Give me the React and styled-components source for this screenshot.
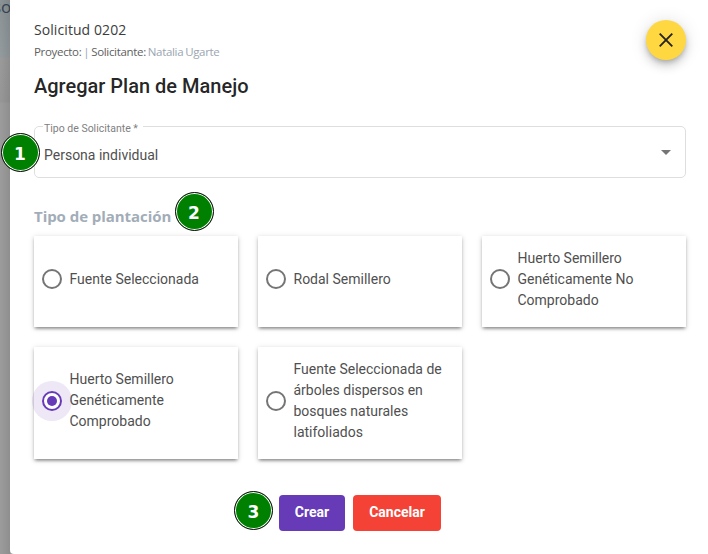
import { useState } from "react";
import styled, { createGlobalStyle, css } from "styled-components";

const GlobalStyle = createGlobalStyle`
  * {
    box-sizing: border-box;
  }

  body {
    margin: 0;
    overflow: hidden;
    font-family: Roboto, "Liberation Sans", sans-serif;
    color: rgba(0, 0, 0, 0.87);
  }
`;

const Screen = styled.div`
  position: relative;
  display: flex;
  width: 708px;
  height: 554px;
  overflow: hidden;
  background: #999;
`;

const Backdrop = styled.div`
  flex: 0 0 10px;
  overflow: hidden;
  background:
    linear-gradient(to right, transparent, rgba(0, 0, 0, 0.09)),
    linear-gradient(#8b9397 0, #949b9e 57px, #9b9b9b 58px, #979797 102px, #9c9c9c 103px);
`;

const BackdropText = styled.div`
  width: 24px;
  margin-left: -7px;
  font-family: "Open Sans", sans-serif;
  font-size: 17px;
  line-height: 13px;
  color: #35424f;
`;

const Dialog = styled.div`
  flex: 1;
  min-width: 0;
  padding: 20px 22px 0 24px;
  border-bottom-left-radius: 4px;
  background: #fff;
`;

const Header = styled.header`
  display: flex;
  justify-content: space-between;
  height: 54px;
`;

const Request = styled.div`
  font-family: "Open Sans", sans-serif;
  font-size: 14px;
  line-height: 20px;
  letter-spacing: 0.08px;
  color: #3c3c3c;
`;

const Project = styled.div`
  font-family: "Open Sans", sans-serif;
  font-size: 11.5px;
  line-height: 23px;
  letter-spacing: -0.32px;
  word-spacing: -0.8px;
  color: #606060;

  span {
    color: #9aa6b2;
  }
`;

const CloseButton = styled.button`
  display: grid;
  place-items: center;
  width: 40px;
  height: 40px;
  padding: 0;
  border: none;
  border-radius: 50%;
  background: #ffd740;
  box-shadow:
    0 3px 5px -1px rgba(0, 0, 0, 0.2),
    0 6px 10px 0 rgba(0, 0, 0, 0.14),
    0 1px 18px 0 rgba(0, 0, 0, 0.12);
`;

const Title = styled.h2`
  margin: 0;
  font-size: 20px;
  font-weight: 500;
  line-height: 25px;
`;

const Select = styled.fieldset`
  display: flex;
  align-items: center;
  justify-content: space-between;
  height: 58px;
  margin: 21px 0 0;
  padding: 0 14px 0 9px;
  border: 1px solid #dedede;
  border-radius: 5px;
  font-size: 14px;
  letter-spacing: 0;
  color: #505050;

  legend {
    height: 12px;
    margin-left: -1px;
    padding: 0 5px 0 1px;
    font-size: 10.5px;
    line-height: 17px;
    letter-spacing: 0;
    color: #808080;
  }

  svg {
    margin-top: -4px;
  }
`;

const SectionTitle = styled.h3`
  margin: 26px 0 7px;
  font-family: "Open Sans", sans-serif;
  font-size: 15px;
  font-weight: 700;
  line-height: 25px;
  letter-spacing: -0.05px;
  color: #a2adb8;
`;

const Options = styled.div`
  display: grid;
  grid-template-columns: repeat(3, 1fr);
  grid-template-rows: 91px 112px;
  gap: 20px;
`;

const Option = styled.label`
  display: flex;
  align-items: center;
  gap: 7.5px;
  padding: 0 14px 5px 8px;
  background: #fff;
  box-shadow:
    0 3px 3px -2px rgba(0, 0, 0, 0.3),
    0 2px 3px 0 rgba(0, 0, 0, 0.18),
    0 1px 6px 0 rgba(0, 0, 0, 0.14);
  font-size: 14px;
  line-height: 21px;
  color: #505050;

  input {
    position: absolute;
    opacity: 0;
  }
`;

const Radio = styled.span`
  display: grid;
  place-items: center;
  flex: 0 0 20px;
  height: 20px;
  border: 2px solid #757575;
  border-radius: 50%;

  ${({ $checked }) =>
    $checked &&
    css`
      border-color: #673ab7;
      box-shadow: 0 0 0 10px rgba(103, 58, 183, 0.12);

      &::after {
        content: "";
        width: 10px;
        height: 10px;
        border-radius: 50%;
        background: #673ab7;
      }
    `}
`;

const Actions = styled.footer`
  display: flex;
  gap: 8px;
  margin: 36px 0 0 245px;
`;

const Button = styled.button`
  width: ${({ $width }) => $width}px;
  height: 36px;
  padding: 0 0 2px;
  border: none;
  border-radius: 4px;
  background: ${({ $color }) => $color};
  font-family: inherit;
  font-size: 14px;
  font-weight: 700;
  color: #fff;
`;

const Step = styled.div`
  position: absolute;
  top: ${({ $top }) => $top}px;
  left: ${({ $left }) => $left}px;
  display: grid;
  place-items: center;
  width: 39px;
  height: 39px;
  padding-top: 2px;
  border: 1.5px solid #111;
  border-radius: 50%;
  background: #008000;
  box-shadow: inset 0 0 0 1px #fff;
  font-family: "DejaVu Sans", sans-serif;
  font-size: 17px;
  font-weight: 700;
  color: #fff;
`;

const plantations = [
  "Fuente Seleccionada",
  "Rodal Semillero",
  "Huerto Semillero Genéticamente No Comprobado",
  "Huerto Semillero Genéticamente Comprobado",
  "Fuente Seleccionada de árboles dispersos en bosques naturales latifoliados",
];

const steps = [
  { left: 0.5, top: 133 },
  { left: 174.5, top: 192 },
  { left: 234, top: 491 },
];

export default function App() {
  const [selected, setSelected] = useState(3);

  return (
    <>
      <GlobalStyle />
      <Screen>
        <Backdrop>
          <BackdropText>so</BackdropText>
        </Backdrop>

        <Dialog role="dialog">
          <Header>
            <div>
              <Request>Solicitud 0202</Request>
              <Project>
                Proyecto: <span>|</span> Solicitante: <span>Natalia Ugarte</span>
              </Project>
            </div>
            <CloseButton aria-label="Cerrar">
              <svg width="14" height="14" viewBox="0 0 14 14">
                <path d="M.7.7l12.6 12.6M13.3.7L.7 13.3" stroke="#222" strokeWidth="1.8" />
              </svg>
            </CloseButton>
          </Header>

          <Title>Agregar Plan de Manejo</Title>

          <Select>
            <legend>Tipo de Solicitante *</legend>
            Persona individual
            <svg width="10" height="5" viewBox="0 0 10 5">
              <path d="M0 0h10L5 5z" fill="#757575" />
            </svg>
          </Select>

          <SectionTitle>Tipo de plantación</SectionTitle>

          <Options>
            {plantations.map((name, i) => (
              <Option key={name}>
                <input
                  type="radio"
                  name="plantation"
                  checked={selected === i}
                  onChange={() => setSelected(i)}
                />
                <Radio $checked={selected === i} />
                <span>{name}</span>
              </Option>
            ))}
          </Options>

          <Actions>
            <Button $width={66} $color="#673ab7">
              Crear
            </Button>
            <Button $width={88} $color="#f44336">
              Cancelar
            </Button>
          </Actions>
        </Dialog>

        {steps.map(({ left, top }, i) => (
          <Step key={left} $left={left} $top={top}>
            {i + 1}
          </Step>
        ))}
      </Screen>
    </>
  );
}
